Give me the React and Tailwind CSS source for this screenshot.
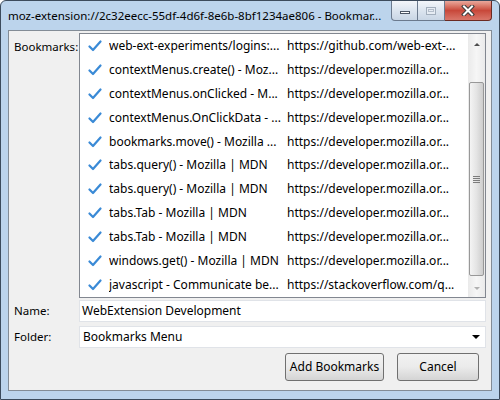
import React from 'react';

const FONT = { fontFamily: '"Noto Sans", "Segoe UI", sans-serif' };

const DEV = 'https://developer.mozilla.or...';

const BOOKMARKS = [
  { title: 'web-ext-experiments/logins:...', url: 'https://github.com/web-ext-...' },
  { title: 'contextMenus.create() - Moz...', url: DEV },
  { title: 'contextMenus.onClicked - M...', url: DEV },
  { title: 'contextMenus.OnClickData - ...', url: DEV },
  { title: 'bookmarks.move() - Mozilla ...', url: DEV },
  { title: 'tabs.query() - Mozilla | MDN', url: DEV },
  { title: 'tabs.query() - Mozilla | MDN', url: DEV },
  { title: 'tabs.Tab - Mozilla | MDN', url: DEV },
  { title: 'tabs.Tab - Mozilla | MDN', url: DEV },
  { title: 'windows.get() - Mozilla | MDN', url: DEV },
  { title: 'javascript - Communicate be...', url: 'https://stackoverflow.com/q...' },
];

const Check = () => (
  <svg width="14" height="12" viewBox="0 0 14 12" className="shrink-0">
    <path d="M1.5 6.5 L5 10 L12.5 1.5" fill="none" stroke="#3a8ad6" strokeWidth="2.2" strokeLinecap="round" strokeLinejoin="round" />
  </svg>
);

const CaptionButtons = () => (
  <div className="flex h-[20px] self-start">
    <div className="w-[27px] h-full border border-t-0 border-[#6b7a8e] rounded-bl-[4px] bg-gradient-to-b from-[#f3f6fa] via-[#dce5ef] to-[#c9d6e5] flex items-center justify-center">
      <div className="w-[10px] h-[3px] border border-[#4b5563] bg-white mt-[4px]" />
    </div>
    <div className="w-[27px] h-full border border-t-0 border-l-0 border-[#6b7a8e] bg-gradient-to-b from-[#f3f6fa] via-[#dce5ef] to-[#c9d6e5] flex items-center justify-center">
      <div className="w-[10px] h-[8px] border border-[#a3afbd] bg-[#e6ecf3] flex items-center justify-center">
        <div className="w-[6px] h-[3px] border border-[#b4becb]" />
      </div>
    </div>
    <div className="w-[47px] h-full border border-t-0 border-l-0 border-[#6b2a22] rounded-br-[4px] bg-gradient-to-b from-[#e9a89c] via-[#c8483a] to-[#d9766a] flex items-center justify-center">
      <svg width="14" height="11" viewBox="0 0 14 11">
        <path d="M3 1.5 L11 9.5 M11 1.5 L3 9.5" stroke="#3b3b3b" strokeWidth="4" strokeLinecap="square" />
        <path d="M3 1.5 L11 9.5 M11 1.5 L3 9.5" stroke="#ffffff" strokeWidth="2" strokeLinecap="square" />
      </svg>
    </div>
  </div>
);

const Scrollbar = () => (
  <div className="w-[17px] h-full flex flex-col bg-gradient-to-r from-[#eaeaea] via-[#f6f6f6] to-[#eaeaea]">
    <div className="h-[17px] flex items-center justify-center">
      <div className="w-0 h-0 border-l-[3px] border-r-[3px] border-b-[3px] border-l-transparent border-r-transparent border-b-[#4d4d4d] mt-[3px]" />
    </div>
    <div className="flex-1 flex flex-col pt-[31px] pb-[4px]">
      <div className="mx-[1px] flex-1 rounded-[2px] border border-[#989898] bg-gradient-to-r from-[#f4f4f4] via-[#e4e4e4] to-[#cdcdcd] flex items-center justify-center">
        <div className="flex flex-col gap-[1px]">
          <div className="w-[7px] h-[1px] bg-[#7c7c7c]" />
          <div className="w-[7px] h-[1px] bg-[#7c7c7c]" />
          <div className="w-[7px] h-[1px] bg-[#7c7c7c]" />
          <div className="w-[7px] h-[1px] bg-[#7c7c7c]" />
        </div>
      </div>
    </div>
    <div className="h-[17px] flex items-center justify-center">
      <div className="w-0 h-0 border-l-[3px] border-r-[3px] border-t-[3px] border-l-transparent border-r-transparent border-t-[#b0b0b0]" />
    </div>
  </div>
);

const Button = ({ children, className }) => (
  <button
    className={`h-[28px] rounded-[3px] border border-[#707070] bg-gradient-to-b from-[#f2f2f2] via-[#ebebeb] to-[#d4d4d4] text-[12px] text-black ${className}`}
    style={FONT}
  >
    {children}
  </button>
);

export default function App() {
  return (
    <div
      className="w-[500px] h-[400px] flex flex-col bg-[#bcd4ec] border border-[#3c4b5c] rounded-tl-[6px] rounded-tr-[6px] overflow-hidden text-[11.5px] text-black"
      style={FONT}
    >
      <div className="h-[29px] flex items-start pl-[7px] pr-[7px]">
        <div className="flex-1 pt-[6px] whitespace-nowrap overflow-hidden text-[11.5px] text-black">
          moz-extension://2c32eecc-55df-4d6f-8e6b-8bf1234ae806 - Bookmar...
        </div>
        <CaptionButtons />
      </div>
      <div className="flex-1 mx-[7px] mb-[8px] border border-[#838c96] bg-[#f0f0f0] flex flex-col pt-[2px] pl-[5px] pr-[5px]">
        <div className="flex">
          <div className="w-[65px] pt-[5px] whitespace-nowrap">Bookmarks:</div>
          <div className="flex-1 h-[265px] border border-[#828790] bg-white flex">
            <div className="flex-1 flex flex-col text-[12px]">
              {BOOKMARKS.map((b, i) => (
                <div key={i} className="h-[24px] flex items-center whitespace-nowrap">
                  <div className="w-[29px] pl-[8px] flex items-center">
                    <Check />
                  </div>
                  <div className="w-[178px] overflow-hidden">{b.title}</div>
                  <div className="flex-1 overflow-hidden">{b.url}</div>
                </div>
              ))}
            </div>
            <Scrollbar />
          </div>
        </div>
        <div className="flex items-center mt-[2px]">
          <div className="w-[65px]">Name:</div>
          <div className="flex-1 h-[22px] border border-[#e0e3e8] bg-white flex items-center pl-[2px] text-[12px]">
            WebExtension Development
          </div>
        </div>
        <div className="flex items-center mt-[4px]">
          <div className="w-[65px]">Folder:</div>
          <div className="flex-1 h-[22px] border border-[#e0e3e8] bg-white flex items-center pl-[3px] pr-[5px] text-[12px]">
            <span className="flex-1">Bookmarks Menu</span>
            <div className="w-0 h-0 border-l-[4px] border-r-[4px] border-t-[4px] border-l-transparent border-r-transparent border-t-black" />
          </div>
        </div>
        <div className="flex justify-end gap-[13px] mt-[5px] pr-[7px]">
          <Button className="w-[99px]">Add Bookmarks</Button>
          <Button className="w-[82px]">Cancel</Button>
        </div>
      </div>
    </div>
  );
}
